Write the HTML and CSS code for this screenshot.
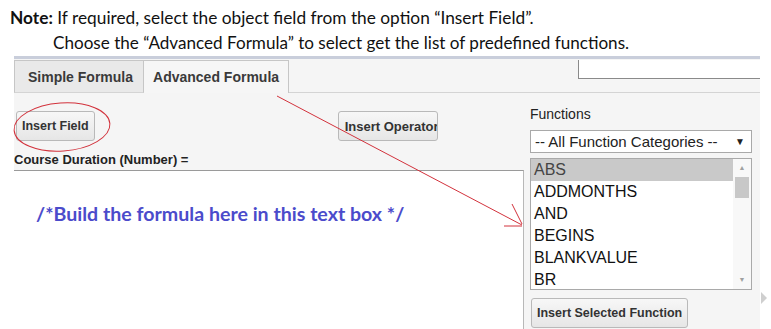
FILE: index.html
```
<!DOCTYPE html>
<html lang="en">
<head>
  <meta charset="UTF-8">
  <title>Advanced Formula</title>
  <link rel="stylesheet" href="styles.css">
</head>
<body>
  <div class="note">
    <p class="note-line"><b>Note:</b> If required, select the object field from the option “Insert Field”.</p>
    <p class="note-line indent">Choose the “Advanced Formula” to select get the list of predefined functions.</p>
  </div>

  <div class="panel">
    <div class="tabbar">
      <div class="tab">Simple Formula</div>
      <div class="tab active">Advanced Formula</div>
      <div class="tab-fill">
        <div class="search-box"></div>
      </div>
    </div>

    <div class="panel-body">
      <div class="left-col">
        <div class="btn-row">
          <button class="btn btn-field">Insert Field</button>
          <button class="btn btn-op">Insert Operator</button>
        </div>
        <div class="field-label">Course Duration (Number) =</div>
        <div class="formula-box">
          <span class="formula-hint">/*Build the formula here in this text box */</span>
        </div>
      </div>

      <div class="right-col">
        <div class="fn-label">Functions</div>
        <div class="fn-select">
          <span>-- All Function Categories --</span>
          <span class="caret">&#9660;</span>
        </div>
        <div class="fn-list">
          <ul class="fn-items">
            <li class="selected">ABS</li>
            <li>ADDMONTHS</li>
            <li>AND</li>
            <li>BEGINS</li>
            <li>BLANKVALUE</li>
            <li>BR</li>
          </ul>
          <div class="scrollbar">
            <span class="sb-arrow">&#9650;</span>
            <span class="sb-thumb"></span>
            <span class="sb-space"></span>
            <span class="sb-arrow">&#9660;</span>
          </div>
        </div>
        <button class="btn btn-insert">Insert Selected Function</button>
      </div>
    </div>
  </div>

  <!-- red hand-drawn marks on top of the screenshot -->
  <svg class="annot" width="771" height="329" viewBox="0 0 771 329">
    <ellipse cx="62" cy="127" rx="48" ry="24" fill="none" stroke="#d2323c" stroke-width="1" transform="rotate(-4 62 127)"/>
    <line x1="277" y1="96" x2="522" y2="225" stroke="#d2323c" stroke-width="1"/>
    <line x1="512" y1="204" x2="522" y2="224" stroke="#d2323c" stroke-width="1"/>
    <line x1="504" y1="226" x2="522" y2="226" stroke="#d2323c" stroke-width="1"/>
  </svg>
  <span class="edge-tri"></span>
</body>
</html>
```

FILE: styles.css
```
body {
  margin: 0;
  width: 771px;
  height: 329px;
  overflow: hidden;
  position: relative;
  background: #fff;
  font-family: Arial, "Liberation Sans", sans-serif;
}
.note {
  padding: 5px 0 0 10px;
  height: 51px;
  font-family: Lato, "Open Sans", sans-serif;
  font-size: 17.3px;
  color: #111;
}
.note-line {
  margin: 0;
  line-height: 25px;
  white-space: nowrap;
}
.note-line b {
  font-weight: 700;
}
.indent {
  padding-left: 43px;
  font-size: 17.1px;
}
.panel {
  margin-left: 14px;
  width: 746px;
  height: 300px;
  background: #f5f5f5;
  border-top: 3px solid #c9cedb;
}
.tabbar {
  display: flex;
  height: 34px;
  padding-top: 1px;
  box-sizing: border-box;
}
.tab {
  padding: 0 10px 0 13px;
  line-height: 32px;
  font-size: 14px;
  font-weight: bold;
  color: #3a3a3a;
  background: #e9e9e9;
  border: 1px solid #c6c6c6;
  border-bottom: 1px solid #d4d4d4;
}
.tab.active {
  background: #f6f6f6;
  border-left: none;
  border-bottom: none;
  padding: 0 9px 0 9px;
}
.tab-fill {
  flex: 1;
  border-bottom: 1px solid #d4d4d4;
  position: relative;
}
.search-box {
  position: absolute;
  left: 289px;
  right: 0;
  top: 0;
  height: 18px;
  background: #fff;
  border-left: 1px solid #8a8a8a;
  border-bottom: 1px solid #8a8a8a;
}
.panel-body {
  display: flex;
  gap: 6px;
}
.left-col {
  width: 510px;
}
.btn-row {
  display: flex;
  padding-top: 18px;
  padding-left: 2px;
}
.btn {
  height: 30px;
  padding: 0 6px;
  white-space: nowrap;
  font-family: Arial, "Liberation Sans", sans-serif;
  font-size: 12.5px;
  font-weight: bold;
  color: #333;
  background: linear-gradient(#f7f7f7, #e6e6e6);
  border: 1px solid #b9b9b9;
  border-radius: 3px;
}
.btn-field {
  padding: 0 5px;
}
.btn-op {
  margin-left: 243px;
  width: 100px;
  overflow: hidden;
  text-align: left;
  padding-left: 6px;
  font-size: 13px;
}
.field-label {
  padding-top: 10px;
  line-height: 17px;
  height: 19px;
  font-size: 13px;
  font-weight: bold;
  color: #222;
}
.formula-box {
  height: 200px;
  background: #fff;
  border-top: 1px solid #9a9a9a;
  border-right: 1px solid #b8b8b8;
  padding: 31px 0 0 22px;
  box-sizing: border-box;
}
.formula-hint {
  font-family: Lato, "Open Sans", sans-serif;
  font-weight: bold;
  font-size: 19.6px;
  color: #4b4bcb;
}
.right-col {
  width: 222px;
  padding-top: 13px;
}
.fn-label {
  font-size: 14px;
  line-height: 16px;
  color: #222;
}
.fn-select {
  margin-top: 8px;
  height: 23px;
  box-sizing: border-box;
  border: 1px solid #a9a9a9;
  background: #fff;
  display: flex;
  justify-content: space-between;
  align-items: center;
  padding: 0 6px 0 4px;
  font-size: 15px;
  color: #222;
}
.caret {
  font-size: 10px;
  color: #222;
}
.fn-list {
  margin-top: 5px;
  height: 132px;
  box-sizing: border-box;
  border: 1px solid #a9a9a9;
  background: #fff;
  display: flex;
}
.fn-items {
  list-style: none;
  margin: 0;
  padding: 0;
  flex: 1;
}
.fn-items li {
  height: 22px;
  line-height: 22px;
  padding-left: 3px;
  font-size: 16px;
  color: #111;
}
.fn-items li.selected {
  background: #c9c9c9;
  color: #444;
}
.scrollbar {
  width: 18px;
  background: #f8f8f8;
  display: flex;
  flex-direction: column;
  align-items: center;
}
.sb-arrow {
  font-size: 7px;
  color: #a0a0a0;
  height: 18px;
  line-height: 18px;
}
.sb-thumb {
  width: 14px;
  height: 21px;
  background: #c8c8c8;
}
.sb-space {
  flex: 1;
}
.btn-insert {
  margin-top: 8px;
  margin-left: 1px;
  height: 30px;
  padding: 0 5px;
}
.annot {
  position: absolute;
  left: 0;
  top: 0;
  pointer-events: none;
}
.edge-tri {
  position: absolute;
  left: 761px;
  top: 292px;
  width: 0;
  height: 0;
  border-top: 6px solid transparent;
  border-bottom: 6px solid transparent;
  border-left: 6px solid #cfcfcf;
}
```
